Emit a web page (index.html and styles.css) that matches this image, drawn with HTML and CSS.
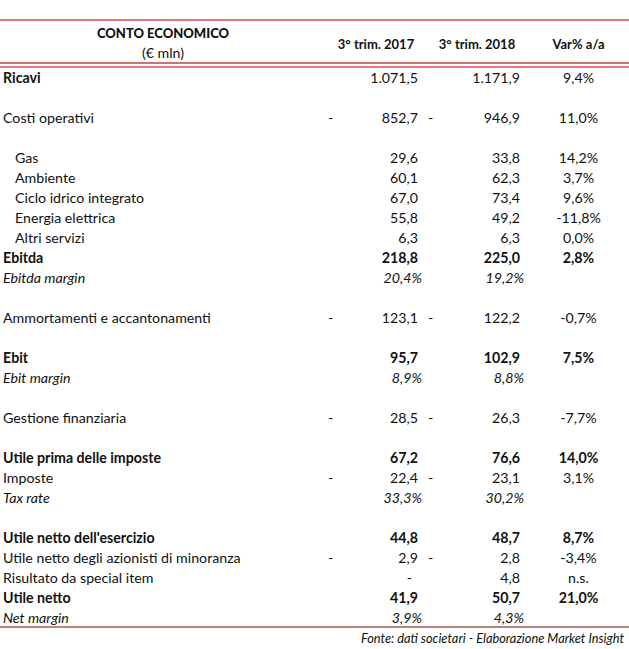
FILE: index.html
```html
<!DOCTYPE html>
<html lang="it">
<head>
<meta charset="utf-8">
<title>Conto economico</title>
<link rel="stylesheet" href="styles.css">
</head>
<body>
<div class="sheet">
  <div class="head">
    <div class="h-label"><b>CONTO ECONOMICO</b><span>(€ mln)</span></div>
    <div class="h-col">3° trim. 2017</div>
    <div class="h-col">3° trim. 2018</div>
    <div class="h-col">Var% a/a</div>
  </div>
  <div class="double"></div>
  <div class="body">
    <div class="row"><div class="lab bold">Ricavi</div><div class="num"><span></span><span>1.071,5</span></div><div class="num"><span></span><span>1.171,9</span></div><div class="var">9,4%</div></div>
    <div class="row"></div>
    <div class="row"><div class="lab">Costi operativi</div><div class="num"><span>-</span><span>852,7</span></div><div class="num"><span>-</span><span>946,9</span></div><div class="var">11,0%</div></div>
    <div class="row"></div>
    <div class="row"><div class="lab ind">Gas</div><div class="num"><span></span><span>29,6</span></div><div class="num"><span></span><span>33,8</span></div><div class="var">14,2%</div></div>
    <div class="row"><div class="lab ind">Ambiente</div><div class="num"><span></span><span>60,1</span></div><div class="num"><span></span><span>62,3</span></div><div class="var">3,7%</div></div>
    <div class="row"><div class="lab ind">Ciclo idrico integrato</div><div class="num"><span></span><span>67,0</span></div><div class="num"><span></span><span>73,4</span></div><div class="var">9,6%</div></div>
    <div class="row"><div class="lab ind">Energia elettrica</div><div class="num"><span></span><span>55,8</span></div><div class="num"><span></span><span>49,2</span></div><div class="var">-11,8%</div></div>
    <div class="row"><div class="lab ind">Altri servizi</div><div class="num"><span></span><span>6,3</span></div><div class="num"><span></span><span>6,3</span></div><div class="var">0,0%</div></div>
    <div class="row bold"><div class="lab">Ebitda</div><div class="num"><span></span><span>218,8</span></div><div class="num"><span></span><span>225,0</span></div><div class="var">2,8%</div></div>
    <div class="row it"><div class="lab">Ebitda margin</div><div class="num pct"><span></span><span>20,4%</span></div><div class="num pct"><span></span><span>19,2%</span></div><div class="var"></div></div>
    <div class="row"></div>
    <div class="row"><div class="lab">Ammortamenti e accantonamenti</div><div class="num"><span>-</span><span>123,1</span></div><div class="num"><span>-</span><span>122,2</span></div><div class="var">-0,7%</div></div>
    <div class="row"></div>
    <div class="row bold"><div class="lab">Ebit</div><div class="num"><span></span><span>95,7</span></div><div class="num"><span></span><span>102,9</span></div><div class="var">7,5%</div></div>
    <div class="row it"><div class="lab">Ebit margin</div><div class="num pct"><span></span><span>8,9%</span></div><div class="num pct"><span></span><span>8,8%</span></div><div class="var"></div></div>
    <div class="row"></div>
    <div class="row"><div class="lab">Gestione finanziaria</div><div class="num"><span>-</span><span>28,5</span></div><div class="num"><span>-</span><span>26,3</span></div><div class="var">-7,7%</div></div>
    <div class="row"></div>
    <div class="row bold"><div class="lab">Utile prima delle imposte</div><div class="num"><span></span><span>67,2</span></div><div class="num"><span></span><span>76,6</span></div><div class="var">14,0%</div></div>
    <div class="row"><div class="lab">Imposte</div><div class="num"><span>-</span><span>22,4</span></div><div class="num"><span>-</span><span>23,1</span></div><div class="var">3,1%</div></div>
    <div class="row it"><div class="lab">Tax rate</div><div class="num pct"><span></span><span>33,3%</span></div><div class="num pct"><span></span><span>30,2%</span></div><div class="var"></div></div>
    <div class="row"></div>
    <div class="row bold"><div class="lab">Utile netto dell'esercizio</div><div class="num"><span></span><span>44,8</span></div><div class="num"><span></span><span>48,7</span></div><div class="var">8,7%</div></div>
    <div class="row"><div class="lab">Utile netto degli azionisti di minoranza</div><div class="num"><span>-</span><span>2,9</span></div><div class="num"><span>-</span><span>2,8</span></div><div class="var">-3,4%</div></div>
    <div class="row"><div class="lab">Risultato da special item</div><div class="num zero"><span></span><span>-</span></div><div class="num"><span></span><span>4,8</span></div><div class="var">n.s.</div></div>
    <div class="row bold"><div class="lab">Utile netto</div><div class="num"><span></span><span>41,9</span></div><div class="num"><span></span><span>50,7</span></div><div class="var">21,0%</div></div>
    <div class="row it last"><div class="lab">Net margin</div><div class="num pct"><span></span><span>3,9%</span></div><div class="num pct"><span></span><span>4,3%</span></div><div class="var"></div></div>
  </div>
  <div class="source">Fonte: dati societari - Elaborazione Market Insight</div>
</div>
</body>
</html>
```
FILE: styles.css
```css
html, body {
  margin: 0;
  padding: 0;
  background: #ffffff;
}
body {
  font-family: Lato, "Open Sans", sans-serif;
  font-size: 14.2px;
  color: #111111;
}
.sheet {
  width: 629px;
  padding-top: 19px;
}
.head {
  display: grid;
  grid-template-columns: 326px 100px 102px 101px;
  height: 41px;
  border-top: 2px solid #e8767a;
  font-weight: bold;
  font-size: 13px;
}
.h-label {
  display: flex;
  flex-direction: column;
  align-items: center;
  padding-top: 2px;
  line-height: 20px;
}
.h-label span {
  font-weight: normal;
  font-size: 14.2px;
}
.h-col {
  display: flex;
  align-items: center;
  justify-content: center;
  padding-top: 3px;
}
.double {
  height: 2px;
  border-top: 2px solid #c8766f;
  border-bottom: 2px solid #e8767a;
}
.row {
  display: grid;
  grid-template-columns: 326px 100px 102px 101px;
  height: 20px;
  line-height: 20px;
  white-space: nowrap;
}
.row.last {
  height: 18px;
  border-bottom: 2px solid #bf8480;
}
.bold {
  font-weight: bold;
}
.it {
  font-style: italic;
}
.lab {
  padding-left: 3px;
}
.lab.ind {
  padding-left: 15px;
}
.num {
  display: flex;
  justify-content: space-between;
  padding: 0 8px 0 2px;
}
.num.pct {
  padding-right: 4px;
}
.num.zero {
  padding-right: 14px;
}
.var {
  text-align: center;
}
.source {
  text-align: right;
  font-style: italic;
  font-size: 12.8px;
  padding-right: 5px;
  line-height: 21px;
}
```
